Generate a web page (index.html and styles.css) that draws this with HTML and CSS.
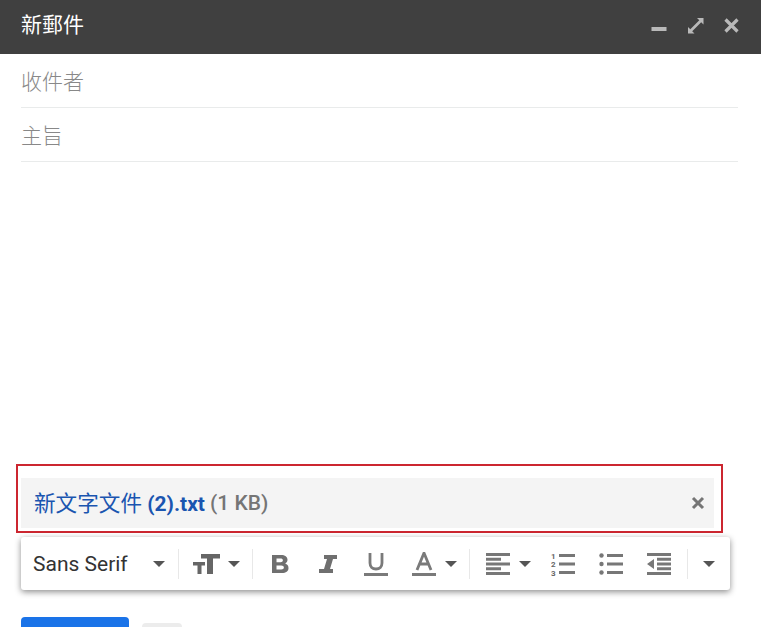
FILE: index.html
```html
<!DOCTYPE html>
<html lang="zh-Hant">
<head>
<meta charset="utf-8">
<title>新郵件</title>
<link rel="stylesheet" href="styles.css">
</head>
<body>
<div class="compose">
  <header class="head">
    <div class="title">新郵件</div>
    <div class="win">
      <svg class="i-min" width="16" height="16" viewBox="0 0 16 16"><rect x="0.5" y="10" width="15" height="4" fill="#b9b9b9"/></svg>
      <svg class="i-exp" width="17" height="17" viewBox="0 0 17 17"><path d="M10 1h6.500v6.500l-2.300-2.300-9 9 2.300 2.300H1V10l2.300 2.300 9-9z" fill="#b9b9b9"/></svg>
      <svg class="i-close" width="15" height="15" viewBox="0 0 15 15"><path d="M1.500 1.500l12 12M13.500 1.500l-12 12" stroke="#b9b9b9" stroke-width="3.200"/></svg>
    </div>
  </header>
  <div class="field">收件者</div>
  <div class="field">主旨</div>
  <div class="body"></div>
  <div class="attach-frame">
    <div class="chip">
      <span class="name"><span class="cjk">新文字文件</span> (2).txt</span>
      <span class="size">(1 KB)</span>
      <svg class="chip-x" width="14" height="14" viewBox="0 0 14 14"><path d="M2 2l10 10M12 2L2 12" stroke="#757575" stroke-width="3"/></svg>
    </div>
  </div>
  <div class="toolbar">
    <div class="tb-group font"><span>Sans Serif</span><i class="caret"></i></div>
    <div class="tb-group size-g">
      <svg width="27" height="22" viewBox="0 0 27 22"><path d="M8 1h19v4.500h-7V21h-6V5.500H8z M0 9h12v3.500H8.500V21h-4v-8.500H0z" fill="#666"/></svg>
      <i class="caret"></i>
    </div>
    <div class="tb-group fmt">
      <svg width="18" height="20" viewBox="0 0 18 20"><path fill="#6f6f6f" fill-rule="evenodd" d="M1 1h9c4 0 6.500 2 6.500 4.800 0 1.700-.9 3-2.300 3.700 1.900.6 3.300 2.200 3.300 4.400 0 3.300-2.600 5.100-6.500 5.100H1zM5.500 4.500v3.700H9.500c1.400 0 2.400-.7 2.400-1.900S10.900 4.500 9.500 4.500zM5.500 11.500v4.100h4.700c1.600 0 2.700-.8 2.700-2s-1.100-2.100-2.700-2.100z"/></svg>
      <svg class="gap-i" width="20" height="20" viewBox="0 0 20 20"><path fill="#6f6f6f" d="M6 1h13v4h-4l-3 10h3v4H1v-4h5L9 5H6z"/></svg>
      <svg class="gap-u" width="24" height="24" viewBox="0 0 24 24"><path fill="none" stroke="#7a7a7a" stroke-width="2.800" d="M6 1v10c0 3.700 2.400 6 6 6s6-2.300 6-6V1"/><rect y="21" width="24" height="3" fill="#7a7a7a"/></svg>
      <svg class="gap-a" width="24" height="24" viewBox="0 0 24 24"><path fill="none" stroke="#7a7a7a" stroke-width="2.800" d="M5 18L12 1l7 17M7.500 12h9"/><rect y="21" width="24" height="3" fill="#7a7a7a"/></svg>
      <i class="caret"></i>
    </div>
    <div class="tb-group align">
      <svg width="24" height="22" viewBox="0 0 24 22"><path fill="#777" d="M0 0h24v3H0zM0 4.750h15v3H0zM0 9.500h24v3H0zM0 14.250h15v3H0zM0 19h24v3H0z"/></svg>
      <i class="caret"></i>
      <svg class="lst1" width="24" height="28" viewBox="0 -2 24 28"><path fill="#777" d="M8 2h16v3H8zM8 10.500h16v3H8zM8 19h16v3H8z"/><text x="0" y="6.500" class="ol">1</text><text x="0" y="15" class="ol">2</text><text x="0" y="23.500" class="ol">3</text></svg>
      <svg class="lst2" width="24" height="24" viewBox="0 0 24 24"><path fill="#777" d="M8 2h16v3H8zM8 10.500h16v3H8zM8 19h16v3H8z"/><circle cx="2.500" cy="3.500" r="2.200" fill="#777"/><circle cx="2.500" cy="12" r="2.200" fill="#777"/><circle cx="2.500" cy="20.500" r="2.200" fill="#777"/></svg>
      <svg class="lst3" width="24" height="24" viewBox="0 0 24 24"><path fill="#777" d="M0 1h24v3H0zM10 5.800h14v3H10zM10 10.500h14v3H10zM10 15.200h14v3H10zM0 20h24v3H0zM7 7v10L0 12z"/></svg>
    </div>
    <div class="tb-group more"><i class="caret"></i></div>
  </div>
  <div class="actions">
    <div class="send"></div>
    <div class="mini"></div>
  </div>
</div>
</body>
</html>
```
FILE: styles.css
```css
* { box-sizing: border-box; }
html, body { margin: 0; height: 627px; overflow: hidden; background: #fff; }
body { font-family: Roboto, "Noto Sans CJK TC", sans-serif; }
.compose { display: flex; flex-direction: column; height: 627px; overflow: hidden; }
.head {
  height: 54px; flex: none; background: #404040; color: #fff;
  display: flex; align-items: center; justify-content: space-between;
  padding: 0 23px 0 21px;
}
.title { font-size: 21px; font-family: "Noto Sans CJK TC", sans-serif; font-weight: 400; line-height: 50px; margin-top: -8px; }
.win { display: flex; align-items: center; margin-top: -4px; }
.i-min { margin-right: 20px; }
.i-exp { margin-right: 20px; }
.i-close { margin-right: -1px; }
.field {
  height: 54px; flex: none; margin: 0 23px 0 21px;
  border-bottom: 1px solid #e9ebeb; color: #888;
  font-family: "Noto Sans CJK TC", sans-serif; font-size: 21px; font-weight: 300;
  line-height: 52px;
}
.body { height: 302px; flex: none; }
.attach-frame {
  margin-left: 16px; width: 707px; height: 69px; flex: none;
  border: 2px solid #cc2630; padding: 12px 7px 3px 3px;
}
.chip {
  height: 50px; background: #f4f4f4; display: flex; align-items: center;
  padding: 0 9px 0 13px; font-size: 21px; line-height: 24px; white-space: nowrap; gap: 5px;
}
.name { color: #1a55b0; font-weight: 700; }
.cjk { font-family: "Noto Sans CJK TC", sans-serif; font-weight: 400; font-size: 21.6px; line-height: 1; }
.size { color: #757575; font-weight: 500; flex: 1; }
.toolbar {
  margin: 4px 31px 0 21px; height: 53px; flex: none; background: #fff; border-radius: 3px;
  box-shadow: 0 2px 6px rgba(0,0,0,.45);
  display: flex; align-items: center;
}
.tb-group { display: flex; align-items: center; height: 30px; border-right: 1px solid #e8e8e8; }
.caret { display: block; width: 0; height: 0; border: 6px solid transparent; border-top: 6px solid #555; border-bottom: 0; flex: none; }
.font { width: 158px; padding: 0 13px 0 12px; font-size: 21px; color: #333; justify-content: space-between; }
.size-g { width: 74px; padding-left: 14px; gap: 8px; }
.fmt { width: 217px; padding-left: 18px; }
.gap-i { margin-left: 29px; }
.gap-u { margin-left: 26px; }
.gap-a { margin-left: 24px; }
.fmt .caret { margin-left: 9px; }
.align { width: 218px; padding-left: 16px; }
.align .caret { margin-left: 9px; }
.lst1 { margin-left: 20px; }
.lst2 { margin-left: 24px; }
.lst3 { margin-left: 24px; }
.ol { font: 700 8px Roboto, sans-serif; fill: #666; }
.more { border: 0; padding-left: 15px; }
.actions { display: flex; align-items: flex-start; margin: 27px 0 0 21px; gap: 13px; }
.send { width: 108px; height: 40px; background: #1a73e8; border-radius: 4px; flex: none; }
.mini { width: 40px; height: 30px; background: #ececec; border-radius: 4px; margin-top: 6px; flex: none; }
```
